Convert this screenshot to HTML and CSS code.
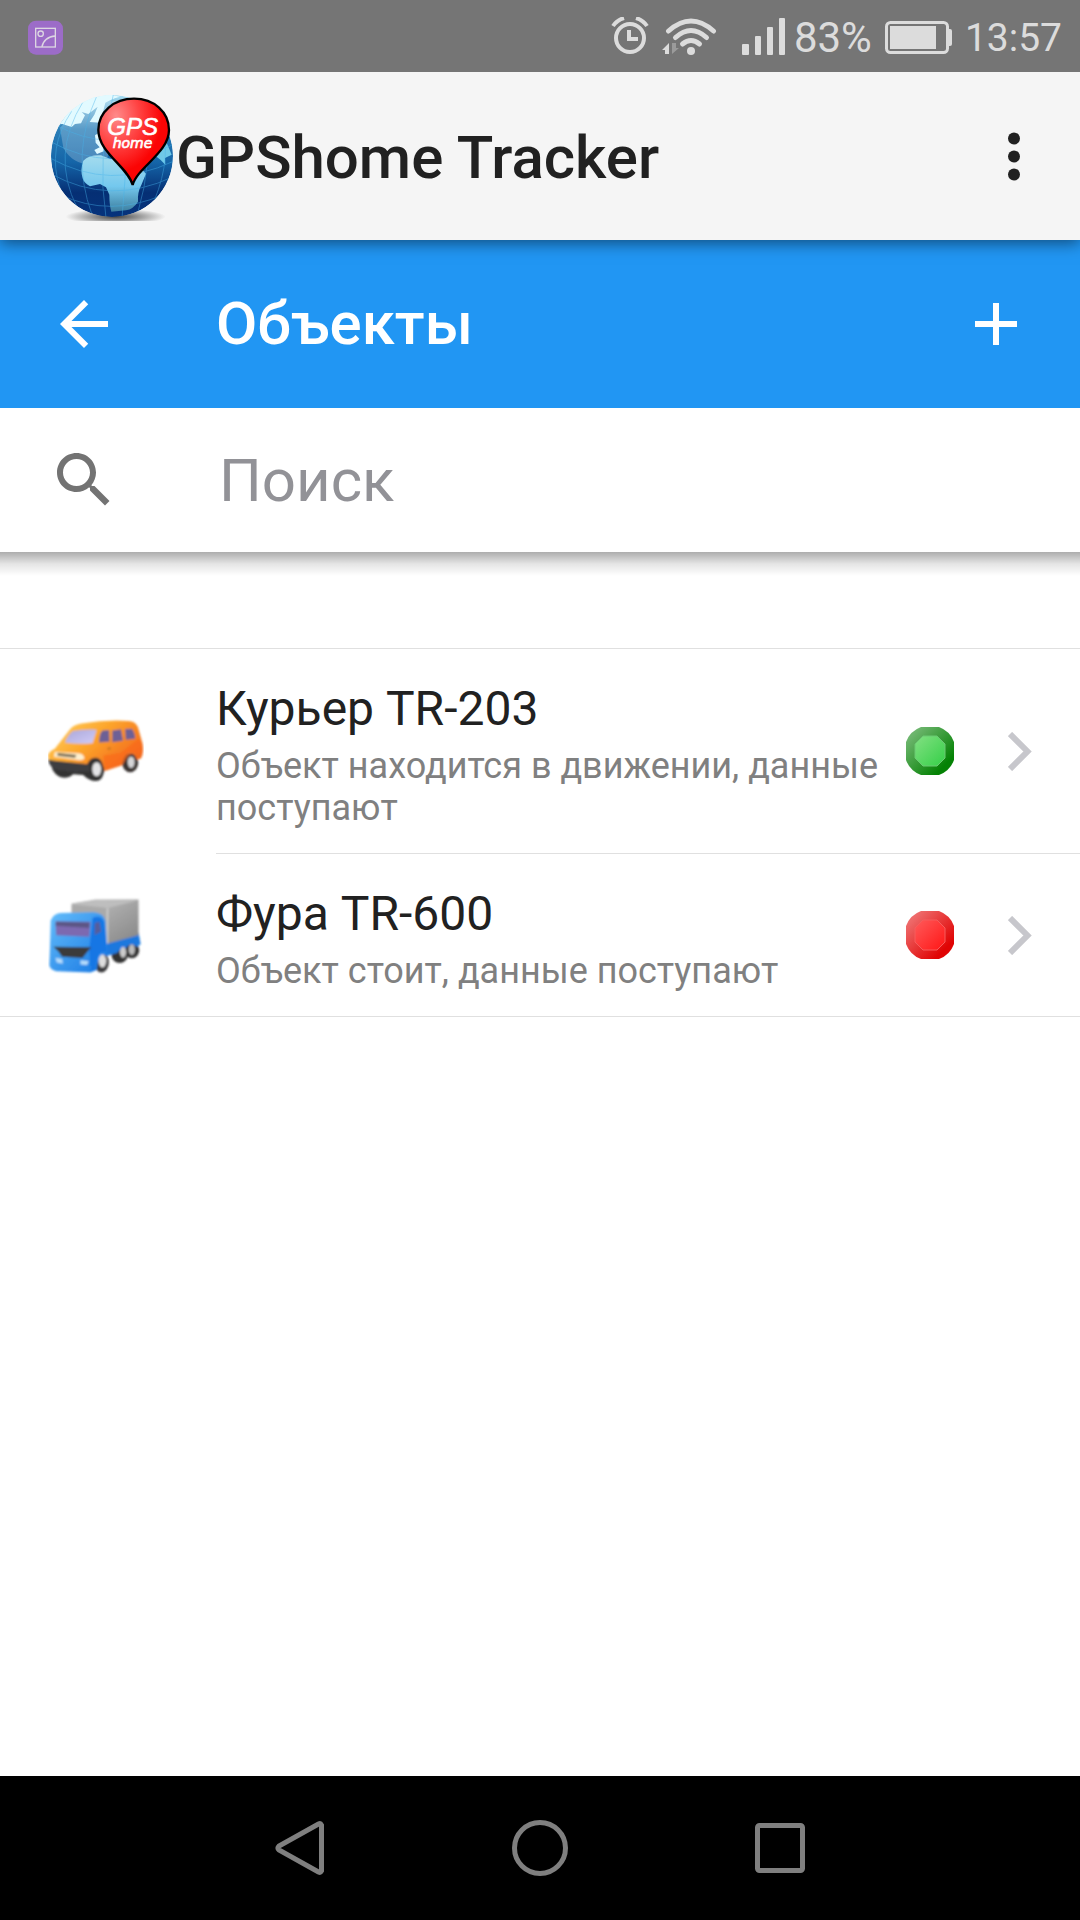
FILE: index.html
```html
<!DOCTYPE html>
<html lang="ru">
<head>
  <meta charset="UTF-8">
  <meta name="viewport" content="width=device-width, initial-scale=1.0">
  <title>GPShome Tracker</title>
  <link rel="stylesheet" href="styles.css">
</head>
<body>
  <div class="status-bar">
    <svg class="status-app" width="35" height="38" viewBox="84 52 105 114">
      <rect x="84" y="57" width="105" height="102" rx="24" fill="#9c6cc8"/>
      <g fill="none" stroke="#dcd6e2" stroke-width="4">
        <rect x="107" y="80" width="59" height="56"/>
        <circle cx="122" cy="96" r="8"/>
        <path d="M126 136c2-18 18-32 40-33"/>
      </g>
    </svg>
    <div class="status-icons">
      <svg width="38" height="41" viewBox="612 17 38 41" fill="none" stroke="#dcdcdc">
        <circle cx="631" cy="38" r="14" stroke-width="4"/>
        <path d="M630 30v9h9" stroke-width="4"/>
        <path d="M614 26q4-6 11-8M648 26q-4-6-11-8" stroke-width="4"/>
      </svg>
      <svg width="68" height="41" viewBox="661 17 68 41">
        <g fill="none" stroke="#dcdcdc" stroke-width="5" stroke-linecap="round">
          <path d="M668.500 31q22.500-20 45 0"/>
          <path d="M675.500 37.500q15.500-14 31 0"/>
          <path d="M682.500 44q8.500-7 17 0"/>
        </g>
        <circle cx="691" cy="51" r="4" fill="#dcdcdc"/>
        <path d="M669 43l-7 7h3v4h4z" fill="#dcdcdc"/>
        <path d="M672 54l7-6h-3v-5h-4z" fill="#9b9b9b"/>
      </svg>
      <div class="signal">
        <svg width="45" height="41" viewBox="740 17 45 41" fill="#dcdcdc">
          <rect x="741" y="44" width="7" height="11" rx="1"/>
          <rect x="754" y="36" width="6" height="19" rx="1"/>
          <rect x="766" y="27" width="6" height="28" rx="1"/>
          <rect x="778" y="18" width="6" height="37" rx="1"/>
        </svg>
        <span class="battery-level">83%</span>
      </div>
      <svg width="69" height="41" viewBox="883 17 69 41">
        <rect x="885.500" y="22.500" width="61" height="30" rx="4" fill="none" stroke="#dcdcdc" stroke-width="3"/>
        <rect x="889" y="26" width="46" height="23" fill="#dcdcdc"/>
        <path d="M947 29h2q2 0 2 2v13q0 2-2 2h-2z" fill="#dcdcdc"/>
      </svg>
      <span class="clock">13:57</span>
    </div>
  </div>

  <header class="app-bar">
    <svg class="logo" width="125" height="128" viewBox="153 278 375 384">
      <defs>
        <linearGradient id="ocean" x1="0" y1="0" x2="0" y2="1">
          <stop offset="0" stop-color="#a9def2"/>
          <stop offset=".28" stop-color="#2b7fb8"/>
          <stop offset=".55" stop-color="#1565a8"/>
          <stop offset=".8" stop-color="#052f74"/>
          <stop offset="1" stop-color="#06337c"/>
        </linearGradient>
        <linearGradient id="land" x1="0" y1="0" x2="0" y2="1">
          <stop offset="0" stop-color="#a5dcee"/>
          <stop offset=".55" stop-color="#74c8ee"/>
          <stop offset="1" stop-color="#3d7fa0"/>
        </linearGradient>
        <radialGradient id="pin" cx=".25" cy=".2" r=".65">
          <stop offset="0" stop-color="#ff8a8a"/>
          <stop offset=".5" stop-color="#ff4444"/>
          <stop offset="1" stop-color="#fb0404"/>
        </radialGradient>
        <radialGradient id="ground">
          <stop offset="0" stop-color="#444"/>
          <stop offset="1" stop-color="#444" stop-opacity="0"/>
        </radialGradient>
        <clipPath id="globe"><circle cx="336" cy="464" r="183"/></clipPath>
        <clipPath id="floor"><rect x="190" y="620" width="320" height="39"/></clipPath>
      </defs>
      <ellipse cx="347" cy="646" rx="150" ry="24" fill="url(#ground)" clip-path="url(#floor)"/>
      <g clip-path="url(#globe)">
        <circle cx="336" cy="464" r="183" fill="url(#ocean)"/>
        <path d="M180 380Q250 290 360 300L320 480Q230 510 190 440Z" fill="#fff" opacity=".22"/>
        <path d="M165 370l22-2 28 9 10-9 18-2 12-24-10-10 20 6 28-22-10 24-14 22 32 2 15-60 36-18-32-8-100 0-60 40z" fill="#e2faff"/>
        <path d="M190 340l50-44 80-18 40 8-50 14-12 16-34 4-22 0-14 14-6 26-20 4z" fill="#e2faff"/>
        <path d="M285 402l12-8 12 20 2 36-20 8-8-12 16-8-12-14z" fill="#dff8ff"/>
        <path d="M250 478q18-18 53-16l28 11 50-4 40 30 17 18-14 34q-12 22-10 50-14 22-36 26l-44 4q-6-20-6-51l-10-22-18-10-30 7q-18-10-22-24-8-26 2-53z" fill="url(#land)"/>
        <path d="M464 462l36-38 15 36-20 10 1 20-14-14z" fill="#6fc9e8"/>
        <g fill="none" stroke="#48b4ea" stroke-width="3" opacity=".42">
          <path d="M150 420Q330 520 520 430M150 470Q330 570 520 480M150 516Q330 616 520 526M180 580Q330 650 490 580M165 370Q330 460 505 380"/>
          <path d="M250 300Q150 460 232 620M290 285Q210 460 276 640M340 280Q290 470 318 650M390 290Q380 480 366 650M440 310Q460 480 412 640M215 330Q140 440 180 560M480 350Q520 460 462 600"/>
        </g>
      </g>
      <path d="M398 551C385 498 295 454 295 386C295 332 342 292 402 292C462 292 507 332 507 386C507 454 412 498 398 551Z" fill="url(#pin)" stroke="#000" stroke-width="7"/>
      <text class="logo-text" x="322" y="400" font-size="72">GPS</text>
      <text class="logo-text logo-text-small" x="338" y="441" font-size="42">home</text>
    </svg>
    <h1 class="app-title">GPShome Tracker</h1>
    <button class="icon-btn" aria-label="Меню">
      <svg width="72" height="72" viewBox="0 0 24 24" fill="currentColor">
        <circle cx="12" cy="5.500" r="2"/>
        <circle cx="12" cy="11.500" r="2"/>
        <circle cx="12" cy="17.500" r="2"/>
      </svg>
    </button>
  </header>

  <nav class="navbar">
    <button class="icon-btn" aria-label="Назад">
      <svg width="72" height="72" viewBox="0 0 24 24" fill="currentColor"><path d="M20 11H7.830l5.590-5.590L12 4l-8 8 8 8 1.410-1.410L7.830 13H20v-2z"/></svg>
    </button>
    <h2 class="navbar-title">Объекты</h2>
    <button class="icon-btn" aria-label="Добавить">
      <svg width="72" height="72" viewBox="0 0 24 24" fill="currentColor"><path d="M19 13h-6v6h-2v-6H5v-2h6V5h2v6h6v2z"/></svg>
    </button>
  </nav>

  <form class="search-bar">
    <label class="search-icon" for="search" aria-label="Поиск">
      <svg width="72" height="72" viewBox="0 0 24 24" fill="currentColor"><path d="M15.500 14h-.79l-.28-.27C15.410 12.590 16 11.110 16 9.500 16 5.910 13.090 3 9.500 3S3 5.910 3 9.500 5.910 16 9.500 16c1.610 0 3.090-.59 4.230-1.570l.27.28v.79l5 4.990L20.490 19l-4.990-5zm-6 0C7.010 14 5 11.990 5 9.500S7.010 5 9.500 5 14 7.010 14 9.500 11.990 14 9.500 14z"/></svg>
    </label>
    <input class="search-input" id="search" type="search" placeholder="Поиск">
  </form>

  <main class="content">
    <ul class="object-list">
      <li>
        <a class="object" href="#tr-203">
          <svg class="object-icon" width="96" height="96" viewBox="58 41 284 284">
            <defs>
              <linearGradient id="van" x1="0" y1="0" x2="1" y2=".6">
                <stop offset="0" stop-color="#ffd668"/>
                <stop offset=".5" stop-color="#fda62c"/>
                <stop offset="1" stop-color="#f26a1c"/>
              </linearGradient>
              <linearGradient id="glass" x1="0" y1="0" x2="1" y2="1">
                <stop offset="0" stop-color="#a9a6d8"/>
                <stop offset="1" stop-color="#d2cdf8"/>
              </linearGradient>
              <filter id="soft" x="-10%" y="-10%" width="120%" height="120%"><feGaussianBlur stdDeviation="3"/></filter>
            </defs>
            <g filter="url(#soft)">
              <path d="M62 206l10 34q14 22 34 22 18 0 26-10l30 2q18 18 38 18 18-2 22-22l4-12-10-40-30-10z" fill="#333"/>
              <ellipse cx="301" cy="218" rx="24" ry="28" fill="#3a3533"/>
              <path d="M58 196q4-14 20-20l44-56q10-14 34-18 72-12 140-8 20 0 28 18l14 50q4 30-6 44l-12 2q-6-22-24-18-14 6-20 36l-50 16-8-24q-8-18-26-14-14 4-20 24l-94-8q-18-2-20-24z" fill="url(#van)"/>
              <path d="M222 196l52-8 50-40 10 10v36l-14-4q-20-8-38 30l-52 20q-8-20-8-44z" fill="#fa681c" opacity=".65"/>
              <path d="M108 158q8-22 24-34 34-6 70-4l-12 40q-44 4-82-2z" fill="url(#glass)"/>
              <path d="M209 158q0-26 10-36l20-1 1 35zM248 122l26-3 6 34-32 4zM286 118l20-1q10 12 10 30l-28 3z" fill="#6d6195"/>
              <path d="M78 186l66 4q20 0 22 16-8 6-24 3l-66-9z" fill="#fff0cf"/>
              <path d="M86 189l56 6-4 8-52-6z" fill="#716044"/>
              <path d="M58 208l20 4 100 10 6 20-44 4-62-8q-16-10-20-30z" fill="#3c3c40"/>
              <ellipse cx="202" cy="237" rx="13" ry="21" fill="#e4e4e6"/>
              <ellipse cx="304" cy="216" rx="10" ry="17" fill="#d6d6d8"/>
              <path d="M234 174l9-1v5h-9z" fill="#a86a20"/>
            </g>
          </svg>
          <div class="object-text">
            <div class="object-name">Курьер TR-203</div>
            <div class="object-status">Объект находится в движении, данные поступают</div>
          </div>
          <svg class="object-state" width="48" height="48" viewBox="0 0 48 48">
            <defs>
              <linearGradient id="green-rim" x1="0" y1="0" x2="1" y2="1"><stop offset=".15" stop-color="#6db56d"/><stop offset=".8" stop-color="#058205"/></linearGradient>
              <linearGradient id="green" x1="0" y1="0" x2="1" y2="1"><stop offset="0" stop-color="#82e082"/><stop offset="1" stop-color="#35cf48"/></linearGradient>
            </defs>
            <path d="M15 0h18Q44 4 48 15v18Q44 44 33 48H15Q4 44 0 33V15Q4 4 15 0z" fill="url(#green-rim)"/>
            <path d="M17 9h14l8 8v14l-8 8H17l-8-8V17z" fill="url(#green)" stroke="#6bc873"/>
          </svg>
          <svg class="chevron" width="24" height="39" viewBox="0 0 24 39"><path d="M2 2l17.500 17.500L2 37" fill="none" stroke="#c7c7cc" stroke-width="6"/></svg>
        </a>
      </li>
      <li>
        <a class="object" href="#tr-600">
          <svg class="object-icon" width="96" height="96" viewBox="58 21 284 284">
            <defs>
              <linearGradient id="cab" x1="0" y1="0" x2="1" y2="1">
                <stop offset="0" stop-color="#64bdfb"/>
                <stop offset="1" stop-color="#1677e2"/>
              </linearGradient>
              <linearGradient id="box" x1="0" y1="0" x2="1" y2="1">
                <stop offset="0" stop-color="#c4c4c4"/>
                <stop offset="1" stop-color="#858585"/>
              </linearGradient>
            </defs>
            <g filter="url(#soft)">
              <ellipse cx="216" cy="244" rx="22" ry="30" fill="#3a3a3c"/>
              <ellipse cx="270" cy="222" rx="24" ry="24" fill="#333"/>
              <ellipse cx="306" cy="208" rx="22" ry="24" fill="#333"/>
              <path d="M228 186l98-30 6 34-12 8q-20-16-36 10-14-4-22 8l-34 10z" fill="#1a78de"/>
              <path d="M128 70l70-12 128 0 0 106-100 26-98-60z" fill="url(#box)"/>
              <path d="M128 70l70-10 126 1-90 22z" fill="#bebebe"/>
              <path d="M128 72l104 12v106l-30-70-74-14z" fill="#aaa"/>
              <path d="M234 84v104" stroke="#d4d4d4" stroke-width="4"/>
              <path d="M66 120q8-20 28-22l98-2q30 2 36 24l6 90-6 14q-20-8-26 42l-18 8-102-4q-16-4-20-16l2-56z" fill="url(#cab)"/>
              <path d="M190 112q24-10 34 12l8 88-18 2q-14 8-16 54l-12 2-6-60z" fill="#1476e4"/>
              <path d="M80 122l104 2-4 44-98-4z" fill="#7d69b0"/>
              <path d="M82 124l98 2v16l-100-6z" fill="#5c5685"/>
              <path d="M196 128l14-5 5 30-19 11z" fill="#575d9b"/>
              <path d="M74 198l112 1-12 14-14 18-60-4-12-16z" fill="#3b3a3b"/>
              <path d="M80 230l20 4 2 14-18-4zM154 238l24 2-4 12-20-2z" fill="#b5dcfb"/>
              <ellipse cx="219" cy="240" rx="11" ry="19" fill="#dedede"/>
              <ellipse cx="280" cy="214" rx="9" ry="16" fill="#ccc"/>
              <ellipse cx="306" cy="206" rx="9" ry="16" fill="#bbb"/>
            </g>
          </svg>
          <div class="object-text">
            <div class="object-name">Фура TR-600</div>
            <div class="object-status">Объект стоит, данные поступают</div>
          </div>
          <svg class="object-state" width="48" height="48" viewBox="0 0 48 48">
            <defs>
              <linearGradient id="red-rim" x1="0" y1="0" x2="1" y2="1"><stop offset=".15" stop-color="#ee6a6a"/><stop offset=".8" stop-color="#e00404"/></linearGradient>
              <linearGradient id="red" x1="0" y1="0" x2="1" y2="1"><stop offset="0" stop-color="#ff5a5a"/><stop offset="1" stop-color="#ff1616"/></linearGradient>
            </defs>
            <path d="M15 0h18Q44 4 48 15v18Q44 44 33 48H15Q4 44 0 33V15Q4 4 15 0z" fill="url(#red-rim)"/>
            <path d="M17 9h14l8 8v14l-8 8H17l-8-8V17z" fill="url(#red)" stroke="#f65c5c"/>
          </svg>
          <svg class="chevron" width="24" height="39" viewBox="0 0 24 39"><path d="M2 2l17.500 17.500L2 37" fill="none" stroke="#c7c7cc" stroke-width="6"/></svg>
        </a>
      </li>
    </ul>
  </main>

  <footer class="system-nav">
    <button class="system-btn" aria-label="Назад">
      <svg width="56" height="56" viewBox="0 0 56 56"><path d="M49.500 5v46q-1 2-3 1L7 30q-2-2 0-4L46.500 4q2-1 3 1z"/></svg>
    </button>
    <button class="system-btn" aria-label="Домой">
      <svg width="56" height="56" viewBox="0 0 56 56"><circle cx="28" cy="28" r="25.500"/></svg>
    </button>
    <button class="system-btn" aria-label="Недавние">
      <svg width="56" height="56" viewBox="0 0 56 56"><rect x="5.500" y="5.500" width="45" height="45" rx="2"/></svg>
    </button>
  </footer>
</body>
</html>
```

FILE: styles.css
```css
* {
  box-sizing: border-box;
}

body {
  margin: 0;
  min-height: 100vh;
  display: flex;
  flex-direction: column;
  font-family: Roboto, 'Liberation Sans', sans-serif;
  background: #fff;
  color: #212121;
}

svg {
  display: block;
  flex-shrink: 0;
}

h1,
h2 {
  margin: 0;
  font-size: 60px;
  font-weight: 500;
  line-height: 72px;
}

button {
  padding: 0;
  border: none;
  background: none;
  color: inherit;
  cursor: pointer;
}

/* status bar */

.status-bar {
  position: relative;
  z-index: 2;
  display: flex;
  justify-content: space-between;
  align-items: center;
  height: 72px;
  padding: 3px 18px 0 28px;
  background: #757575;
  color: #dcdcdc;
}

.status-icons {
  display: flex;
  align-items: center;
  gap: 12px;
}

.signal {
  display: flex;
  align-items: center;
  gap: 8px;
}

.battery-level {
  font-size: 42px;
  line-height: 48px;
}

.clock {
  font-size: 39px;
  line-height: 48px;
}

/* top bars */

.app-bar {
  position: relative;
  z-index: 1;
  display: flex;
  align-items: center;
  height: 168px;
  padding: 3px 30px 0 51px;
  background: #f5f5f5;
  box-shadow: 0 3px 15px rgba(0, 0, 0, 0.5);
}

.logo-text {
  font-family: 'Liberation Sans', Arial, sans-serif;
  font-style: italic;
  fill: #fff;
  stroke: #fff;
  stroke-width: 2;
}

.logo-text-small {
  font-family: 'DejaVu Sans', Verdana, sans-serif;
}

.app-title,
.navbar-title {
  flex: 1;
}

.navbar {
  display: flex;
  align-items: center;
  gap: 96px;
  height: 168px;
  padding: 0 48px;
  background: #2196f3;
  color: #fff;
}

.search-bar {
  position: relative;
  display: flex;
  align-items: center;
  gap: 96px;
  height: 144px;
  padding: 0 48px;
  background: #fff;
}

.search-bar::after {
  content: "";
  position: absolute;
  top: 100%;
  left: 0;
  right: 0;
  height: 24px;
  background: linear-gradient(to bottom, rgba(0, 0, 0, 0.32), rgba(0, 0, 0, 0.1) 50%, rgba(0, 0, 0, 0));
}

.search-icon {
  color: #737373;
}

.search-input {
  flex: 1;
  min-width: 0;
  height: 84px;
  padding: 0 3px;
  border: none;
  outline: none;
  background: none;
  font-family: inherit;
  font-size: 60px;
  color: #212121;
}

.search-input::placeholder {
  color: #929297;
}

/* object list */

.content {
  flex: 1;
  padding-top: 96px;
}

.object-list {
  margin: 0;
  padding: 0;
  list-style: none;
  border-top: 1px solid #e0e0e0;
  border-bottom: 1px solid #e0e0e0;
}

.object-list li + li::before {
  content: "";
  display: block;
  height: 1px;
  margin-left: 216px;
  background: #e0e0e0;
}

.object {
  display: flex;
  align-items: center;
  padding: 24px 48px;
  color: inherit;
  text-decoration: none;
}

.object-icon {
  margin-right: 72px;
}

.object-text {
  flex: 1;
}

.object-name {
  font-size: 48px;
  line-height: 72px;
}

.object-status {
  font-size: 36px;
  line-height: 42px;
  color: #808080;
}

.object-state {
  margin: 0 54px 0 24px;
}

/* system navigation */

.system-nav {
  display: flex;
  justify-content: center;
  align-items: center;
  gap: 184px;
  height: 144px;
  background: #000;
}

.system-btn svg {
  fill: none;
  stroke: #7f7f7f;
  stroke-width: 5;
}
```
